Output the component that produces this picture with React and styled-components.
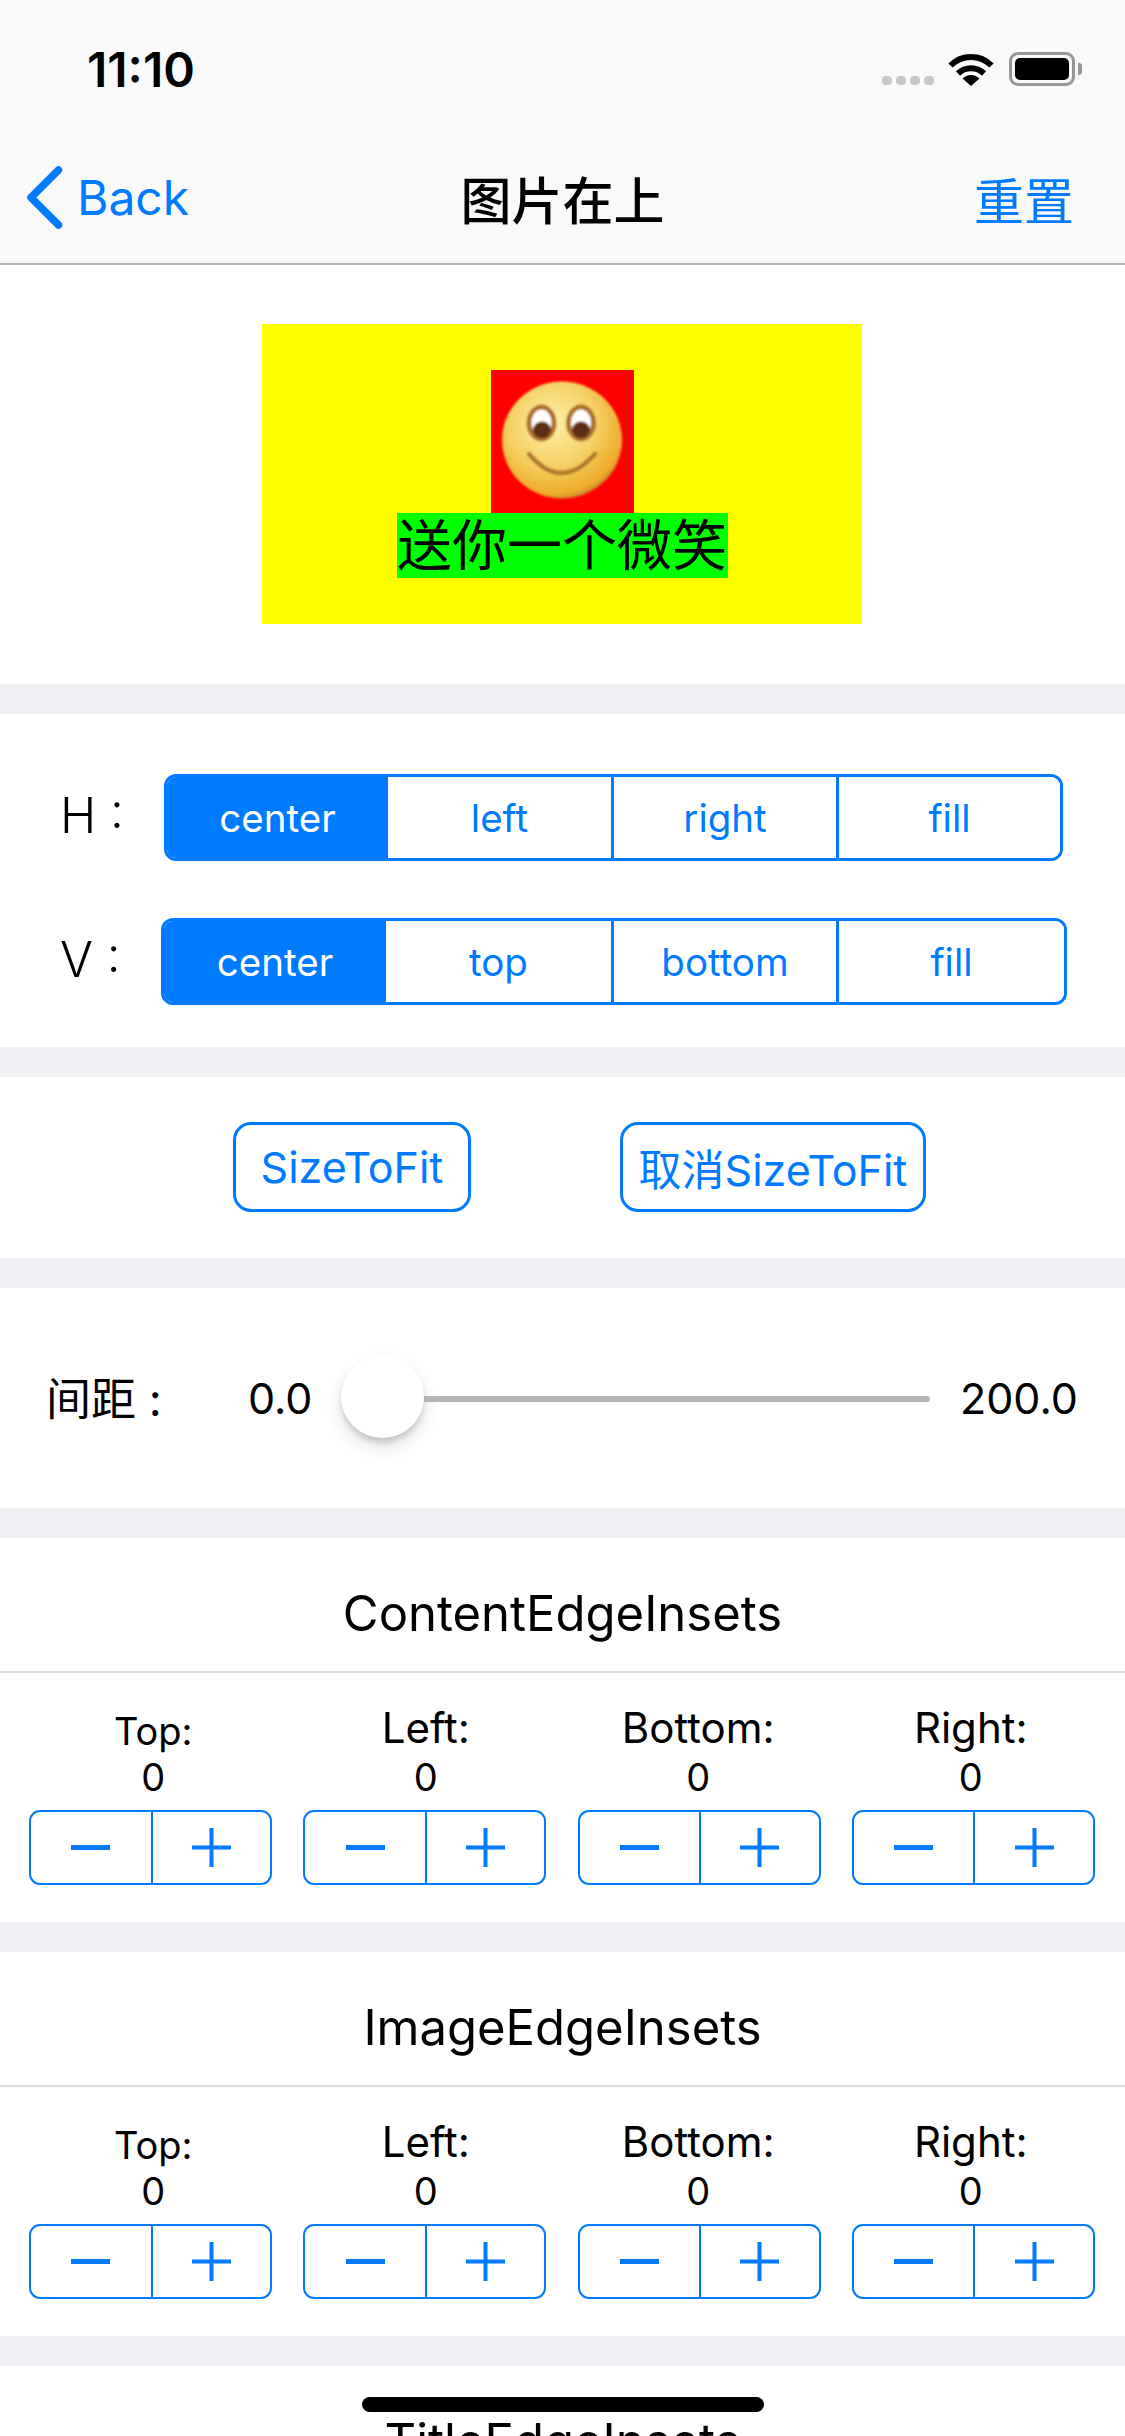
import React from 'react';
import styled, { createGlobalStyle } from 'styled-components';

const BLUE = '#007aff';
const FONT = `Inter, "Noto Sans CJK SC", sans-serif`;

const GlobalStyle = createGlobalStyle`
  html, body {
    margin: 0;
    padding: 0;
    background: #fff;
  }
  * {
    box-sizing: border-box;
  }
`;

const insets = ['Top:', 'Left:', 'Bottom:', 'Right:'];

const Smiley = () => (
  <svg width="143" height="143" viewBox="0 0 143 143">
    <defs>
      <radialGradient id="face" cx="42%" cy="36%" r="70%">
        <stop offset="0%" stopColor="#fdf0a8" />
        <stop offset="50%" stopColor="#f6d267" />
        <stop offset="86%" stopColor="#eeac2b" />
        <stop offset="100%" stopColor="#a8702c" />
      </radialGradient>
      <filter id="soft">
        <feGaussianBlur stdDeviation="0.9" />
      </filter>
    </defs>
    <g filter="url(#soft)">
      <ellipse cx="71" cy="70" rx="60" ry="58.5" fill="url(#face)" />
      <ellipse cx="50.5" cy="53" rx="12.5" ry="16" fill="#fff" stroke="#ad7029" strokeWidth="5" />
      <ellipse cx="90" cy="53" rx="12.5" ry="16" fill="#fff" stroke="#ad7029" strokeWidth="5" />
      <ellipse cx="51" cy="60" rx="9" ry="8.5" fill="#5e2f14" />
      <ellipse cx="90" cy="60" rx="9" ry="8.5" fill="#5e2f14" />
      <path d="M38 84 Q70 122 104 84" fill="none" stroke="#b0772c" strokeWidth="4.5" strokeLinecap="round" />
    </g>
  </svg>
);

const WifiIcon = () => (
  <svg width="46" height="33" viewBox="0 0 46 33">
    <g fill="none" stroke="#000" strokeWidth="6">
      <path d="M2.5 12.5 A29 29 0 0 1 43.5 12.5" />
      <path d="M10 20.5 A18.5 18.5 0 0 1 36 20.5" />
    </g>
    <path d="M23 33 L14.5 25.5 A12 12 0 0 1 31.5 25.5 Z" fill="#000" />
  </svg>
);

const BackChevron = () => (
  <svg width="37" height="63" viewBox="0 0 37 63">
    <path
      d="M32.5 4 L5 31.5 L32.5 59"
      fill="none"
      stroke={BLUE}
      strokeWidth="7.5"
      strokeLinecap="round"
      strokeLinejoin="round"
    />
  </svg>
);

const SignIcon = ({ plus }) => (
  <svg width="39" height="39" viewBox="0 0 39 39">
    <rect x="0" y={plus ? 17.5 : 17} width="39" height={plus ? 4 : 5} fill={BLUE} />
    {plus && <rect x="17.5" y="0" width="4" height="39" fill={BLUE} />}
  </svg>
);

const InsetsSection = ({ title }) => (
  <InsetsCard>
    <InsetsTitle>{title}</InsetsTitle>
    <LabelGrid>
      {insets.map((name, idx) => (
        <LabelColumn key={name}>
          <InsetName $low={idx === 0}>{name}</InsetName>
          <InsetValue>0</InsetValue>
        </LabelColumn>
      ))}
    </LabelGrid>
    <StepperGrid>
      {insets.map((name) => (
        <Stepper key={name}>
          <StepperCell>
            <SignIcon />
          </StepperCell>
          <StepperCell>
            <SignIcon plus />
          </StepperCell>
        </Stepper>
      ))}
    </StepperGrid>
  </InsetsCard>
);

const App = () => {
  return (
    <Screen>
      <GlobalStyle />
      <Header>
        <StatusBar>
          <Clock>11:10</Clock>
          <StatusIcons>
            <SignalDots>
              {[0, 1, 2, 3].map((dot) => (
                <SignalDot key={dot} />
              ))}
            </SignalDots>
            <WifiIcon />
            <Battery>
              <BatteryFill />
            </Battery>
            <BatteryNub />
          </StatusIcons>
        </StatusBar>
        <NavBar>
          <BackLink>
            <BackChevron />
            <span>Back</span>
          </BackLink>
          <NavTitle>图片在上</NavTitle>
          <NavAction>重置</NavAction>
        </NavBar>
      </Header>

      <PreviewCard>
        <PreviewButton>
          <ImageBox>
            <Smiley />
          </ImageBox>
          <TitleBox>送你一个微笑</TitleBox>
        </PreviewButton>
      </PreviewCard>
      <Gap />

      <AlignCard>
        <AlignRow $pad={60}>
          <AlignLabel $width={104}>H :</AlignLabel>
          <Segments $columns="221px 223px 225px 224px">
            <Segment $active>center</Segment>
            <Segment>left</Segment>
            <Segment>right</Segment>
            <Segment>fill</Segment>
          </Segments>
        </AlignRow>
        <AlignRow $pad={60}>
          <AlignLabel $width={101}>V :</AlignLabel>
          <Segments $columns="222px 225px 225px 228px">
            <Segment $active>center</Segment>
            <Segment>top</Segment>
            <Segment>bottom</Segment>
            <Segment>fill</Segment>
          </Segments>
        </AlignRow>
      </AlignCard>
      <Gap />

      <FitCard>
        <FitButton $width={238}>SizeToFit</FitButton>
        <FitButton $width={306}>取消SizeToFit</FitButton>
      </FitCard>
      <Gap />

      <SliderCard>
        <SliderLabel>间距 :</SliderLabel>
        <SliderValue>0.0</SliderValue>
        <Slider>
          <SliderThumb />
          <SliderLine />
        </Slider>
        <SliderMax>200.0</SliderMax>
      </SliderCard>
      <Gap />

      <InsetsSection title="ContentEdgeInsets" />
      <Gap />
      <InsetsSection title="ImageEdgeInsets" />
      <Gap />
      <InsetsTitle>TitleEdgeInsets</InsetsTitle>

      <HomeIndicator />
    </Screen>
  );
};

export default App;

const Screen = styled.div`
  position: relative;
  width: 1125px;
  height: 2436px;
  overflow: hidden;
  background: #fff;
  font-family: ${FONT};
  color: #000;
`;

const Header = styled.header`
  background: #f9f9f9;
  border-bottom: 2px solid #b2b2b2;
  height: 265px;
`;

const StatusBar = styled.div`
  height: 138px;
  display: flex;
  align-items: center;
  justify-content: space-between;
  padding: 0 43px 0 87px;
`;

const Clock = styled.div`
  font-size: 48px;
  font-weight: 600;
`;

const StatusIcons = styled.div`
  display: flex;
  align-items: center;
`;

const SignalDots = styled.div`
  display: flex;
  gap: 4px;
  align-self: flex-end;
  margin: 0 14px 1px 0;
`;

const SignalDot = styled.div`
  width: 10px;
  height: 9px;
  border-radius: 4px;
  background: #c8c8c8;
`;

const Battery = styled.div`
  width: 66px;
  height: 34px;
  margin-left: 15px;
  padding: 3px;
  border: 3px solid #979797;
  border-radius: 9px;
`;

const BatteryFill = styled.div`
  width: 100%;
  height: 100%;
  background: #000;
  border-radius: 5px;
`;

const BatteryNub = styled.div`
  width: 4px;
  height: 12px;
  margin-left: 3px;
  background: #979797;
  border-radius: 0 3px 3px 0;
`;

const NavBar = styled.nav`
  height: 125px;
  display: grid;
  grid-template-columns: 1fr auto 1fr;
  align-items: center;
  padding: 0 26px 6px 26px;
`;

const BackLink = styled.div`
  display: flex;
  align-items: center;
  gap: 14px;
  font-size: 48px;
  color: ${BLUE};
`;

const NavTitle = styled.div`
  font-size: 51px;
  font-weight: 500;
`;

const NavAction = styled.div`
  justify-self: end;
  margin-right: 25px;
  font-size: 50px;
  color: ${BLUE};
`;

const PreviewCard = styled.section`
  height: 419px;
  padding: 0 1px 2px 0;
  display: flex;
  align-items: center;
  justify-content: center;
`;

const PreviewButton = styled.div`
  width: 600px;
  height: 300px;
  background: #ffff00;
  display: flex;
  flex-direction: column;
  align-items: center;
  justify-content: center;
`;

const ImageBox = styled.div`
  width: 143px;
  height: 143px;
  background: #ff0000;
`;

const TitleBox = styled.div`
  width: 331px;
  height: 65px;
  background: #00ff00;
  font-size: 55px;
  line-height: 65px;
  text-align: center;
  white-space: nowrap;
`;

const Gap = styled.div`
  height: 30px;
  background: #efeff4;
`;

const AlignCard = styled.section`
  height: 333px;
  padding-top: 60px;
  display: flex;
  flex-direction: column;
  gap: 57px;
`;

const AlignRow = styled.div`
  display: flex;
  align-items: center;
  padding-left: ${(props) => props.$pad}px;
`;

const AlignLabel = styled.div`
  width: ${(props) => props.$width}px;
  font-size: 49px;
  font-weight: 300;
  white-space: nowrap;
  padding-bottom: 4px;
`;

const Segments = styled.div`
  display: grid;
  grid-template-columns: ${(props) => props.$columns};
  height: 87px;
  border: 3px solid ${BLUE};
  border-radius: 12px;
  overflow: hidden;
`;

const Segment = styled.div`
  display: flex;
  align-items: center;
  justify-content: center;
  font-size: 38.5px;
  background: ${(props) => (props.$active ? BLUE : '#fff')};
  color: ${(props) => (props.$active ? '#fff' : BLUE)};
  border-left: ${(props) => (props.$active ? 'none' : `3px solid ${BLUE}`)};
  &:nth-child(2) {
    border-left: none;
  }
`;

const FitCard = styled.section`
  height: 181px;
  padding: 45px 0 0 233px;
  display: flex;
  align-items: flex-start;
  gap: 149px;
`;

const FitButton = styled.div`
  width: ${(props) => props.$width}px;
  height: 90px;
  border: 3px solid ${BLUE};
  border-radius: 18px;
  display: flex;
  align-items: center;
  justify-content: center;
  font-size: 43px;
  color: ${BLUE};
  white-space: nowrap;
`;

const SliderCard = styled.section`
  height: 220px;
  padding-left: 46px;
  display: flex;
  align-items: center;
  font-size: 43px;
`;

const SliderLabel = styled.div`
  width: 202px;
  font-size: 45px;
  padding-bottom: 4px;
`;

const SliderValue = styled.div`
  width: 93px;
`;

const Slider = styled.div`
  width: 589px;
  display: flex;
  align-items: center;
`;

const SliderThumb = styled.div`
  width: 83px;
  height: 83px;
  margin-bottom: 4px;
  border-radius: 50%;
  background: #fff;
  box-shadow: 0 9px 18px rgba(0, 0, 0, 0.13), 0 5px 5px rgba(0, 0, 0, 0.12);
  flex: none;
`;

const SliderLine = styled.div`
  flex: 1;
  height: 6px;
  margin-top: 2px;
  background: #b5b5b5;
  border-radius: 0 3px 3px 0;
`;

const SliderMax = styled.div`
  margin-left: 30px;
`;

const InsetsCard = styled.section`
  height: 384px;
`;

const InsetsTitle = styled.div`
  height: 135px;
  padding-top: 18px;
  display: flex;
  align-items: center;
  justify-content: center;
  font-size: 49px;
  border-bottom: 2px solid #dcdcdc;
`;

const LabelGrid = styled.div`
  display: grid;
  grid-template-columns: repeat(4, 1fr);
  padding: 29px 18px 0 17px;
`;

const LabelColumn = styled.div`
  display: flex;
  flex-direction: column;
  align-items: center;
  line-height: 50px;
  font-size: 38px;
`;

const InsetName = styled.div`
  height: 50px;
  font-size: ${(props) => (props.$low ? 38 : 42)}px;
  padding-top: ${(props) => (props.$low ? 4 : 1)}px;
`;

const InsetValue = styled.div`
  height: 58px;
`;

const StepperGrid = styled.div`
  display: grid;
  grid-template-columns: repeat(4, 243px);
  column-gap: 31.3px;
  padding: 0 29px;
`;

const Stepper = styled.div`
  display: grid;
  grid-template-columns: 1fr 1fr;
  height: 75px;
  border: 2.5px solid ${BLUE};
  border-radius: 11px;
`;

const StepperCell = styled.div`
  display: flex;
  align-items: center;
  justify-content: center;
  & + & {
    border-left: 2.5px solid ${BLUE};
  }
`;

const HomeIndicator = styled.div`
  position: absolute;
  left: 362px;
  top: 2397px;
  width: 402px;
  height: 15px;
  background: #000;
  border-radius: 8px;
`;
